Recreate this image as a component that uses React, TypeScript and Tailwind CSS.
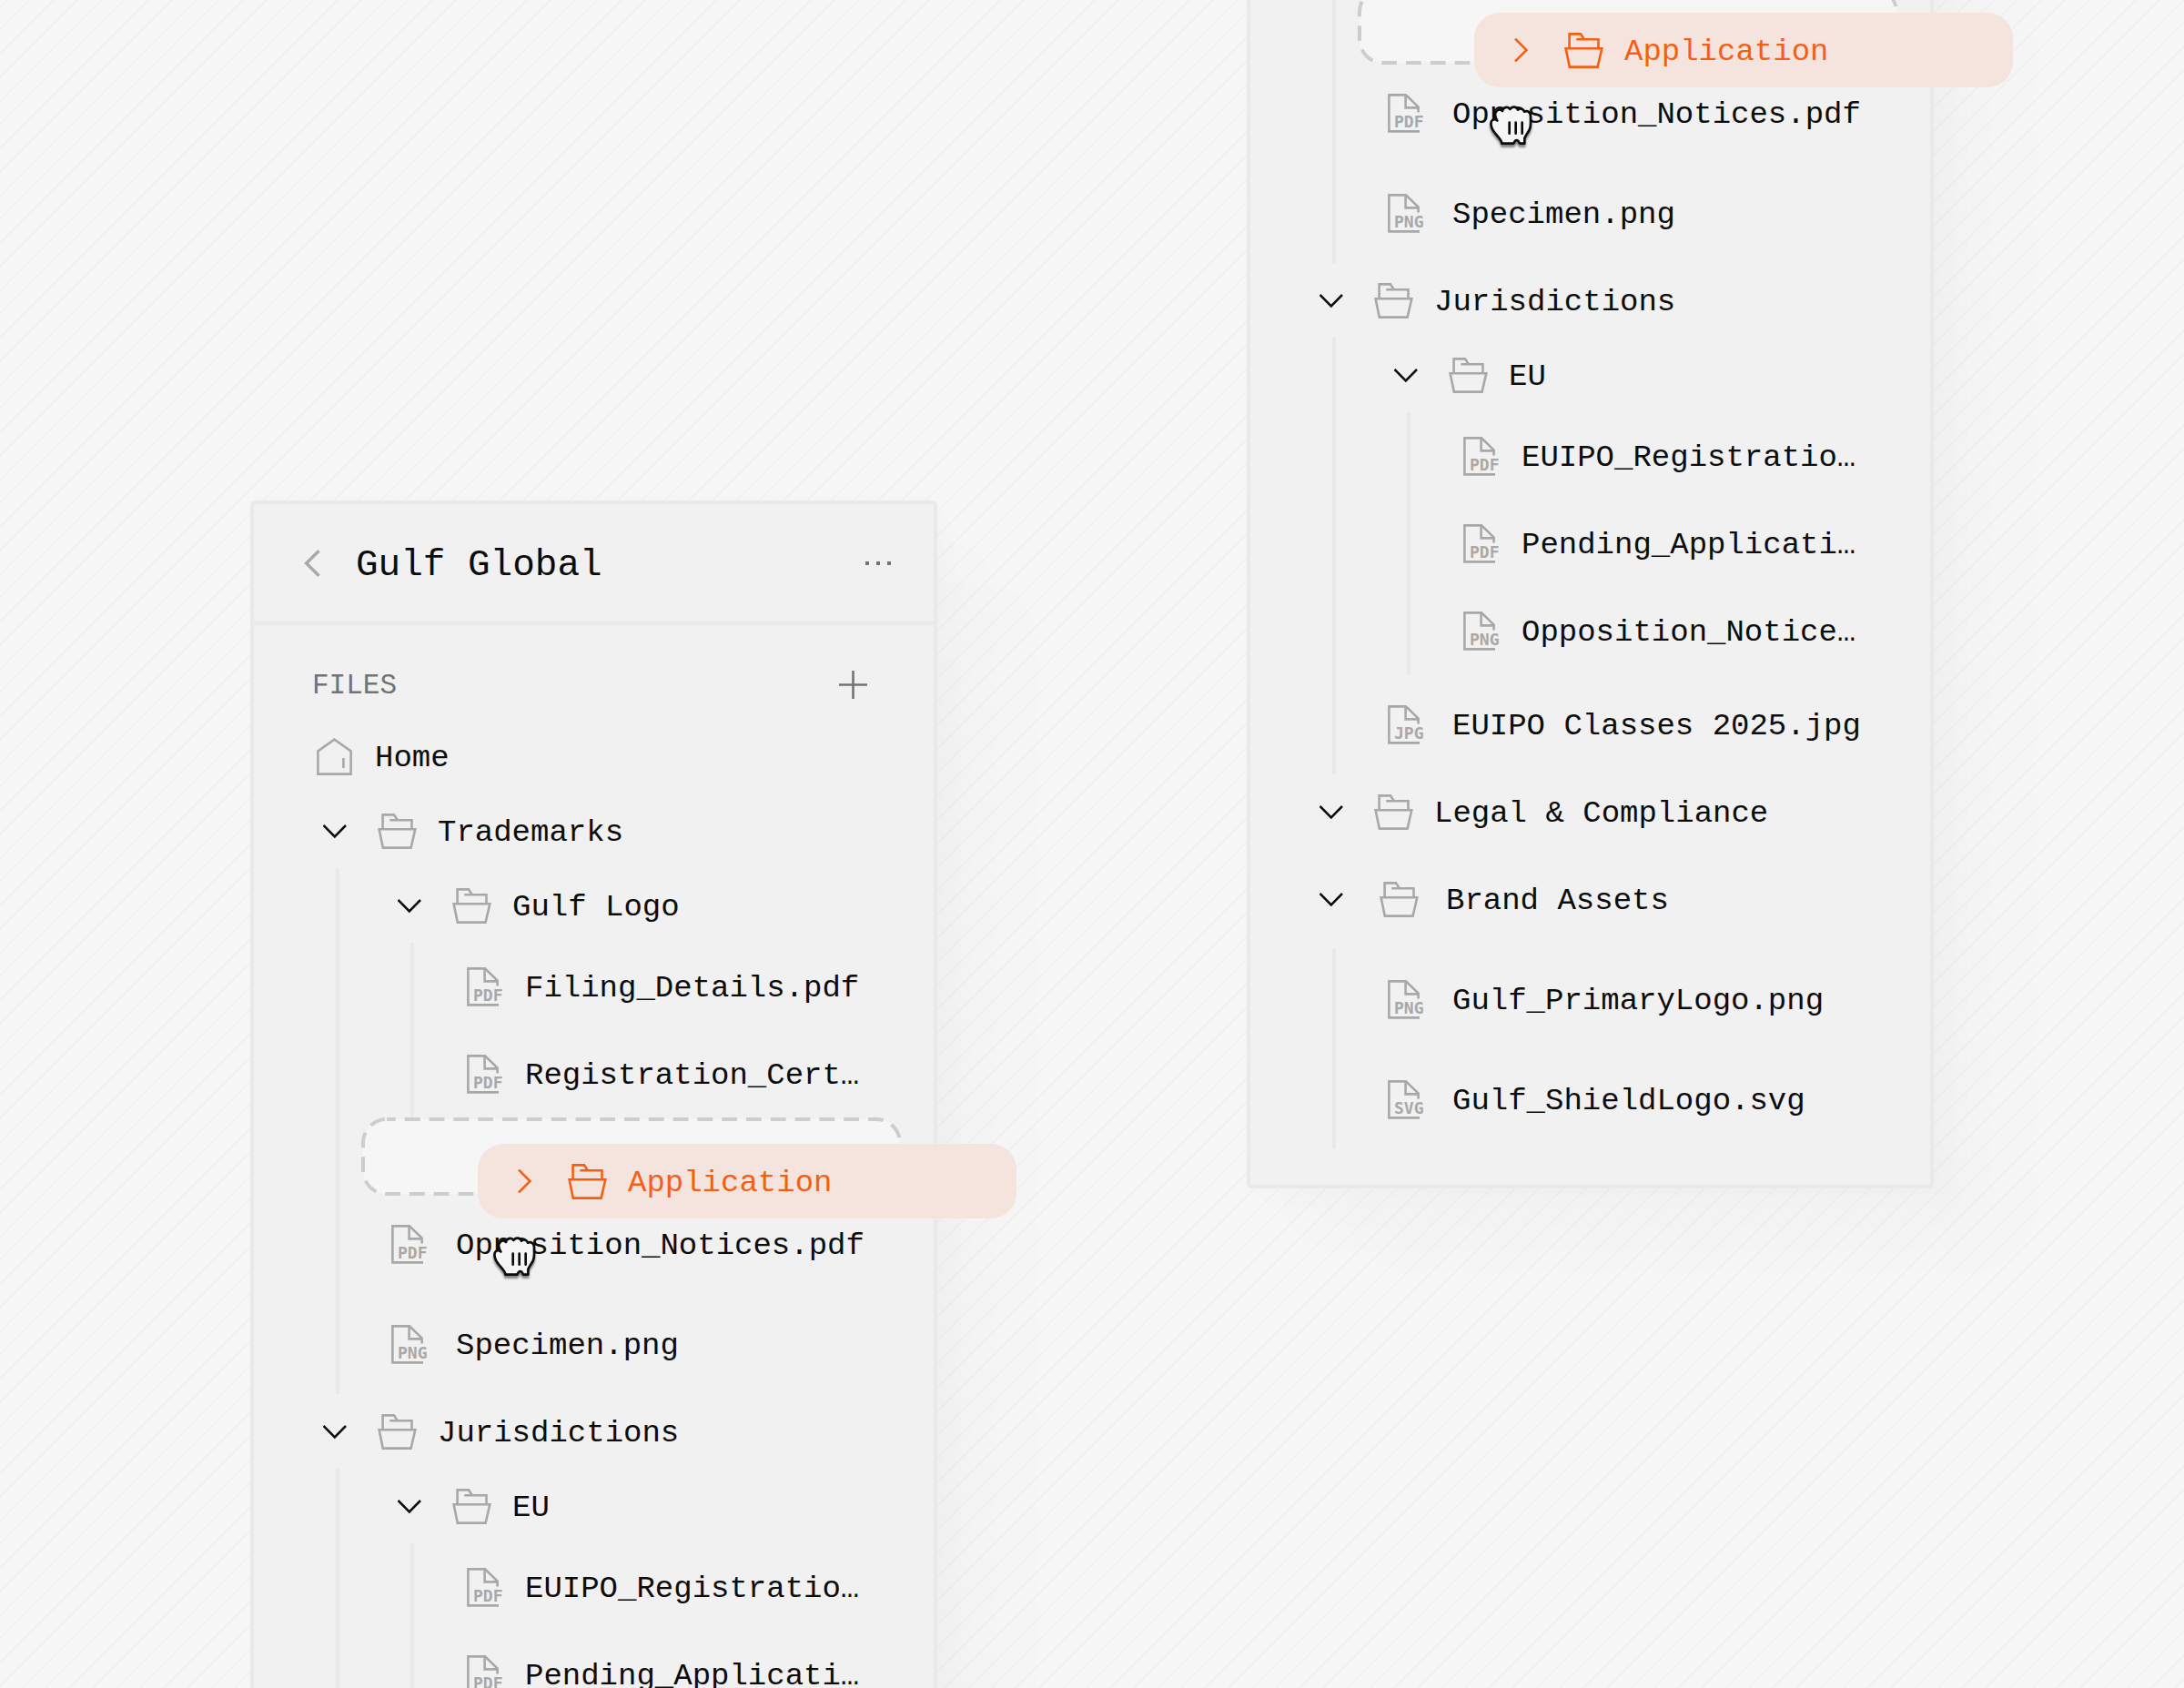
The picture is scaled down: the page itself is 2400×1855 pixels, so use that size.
import type { ReactNode } from 'react';

type FileType = 'PDF' | 'PNG' | 'JPG' | 'SVG';

function ChevronIcon({ right = false }: { right?: boolean }) {
  return (
    <svg width="26" height="26" viewBox="0 0 26 26" fill="none" stroke="currentColor" strokeWidth="2.5" className="shrink-0">
      <path d={right ? 'M6 0.5L18.5 13L6 25.5' : 'M0.5 7L12.8 19.4L25 7'} />
    </svg>
  );
}

function FolderIcon() {
  return (
    <svg width="43" height="39" viewBox="0 0 43 39" fill="none" stroke="currentColor" strokeWidth="2.6" className="shrink-0">
      <path d="M5.6 17V1.4H18L21.8 7.2" />
      <path d="M13.3 7.2H37.5V17" />
      <path d="M1.6 17.2H41.3L36.6 37.6H5.8Z" />
    </svg>
  );
}

function HomeIcon() {
  return (
    <svg width="39" height="41" viewBox="0 0 39 41" fill="none" stroke="#a8a8a8" strokeWidth="2.6" className="shrink-0">
      <path d="M19.4 1.6L37.6 14.4V39.6H1.4V14.4Z" />
      <path d="M29.4 22V33" />
    </svg>
  );
}

function FileIcon({ type }: { type: FileType }) {
  return (
    <svg width="39" height="43" viewBox="0 0 39 43" fill="none" stroke="#a8a8a8" strokeWidth="2.6" className="shrink-0 overflow-visible">
      <path d="M35 41.4H1.4V1.4H20L33.6 14.6V20.5" />
      <path d="M19.6 1.4V15.4H33.6" />
      <text x="7" y="37" fill="#a8a8a8" stroke="none" fontFamily="'DejaVu Sans Mono', monospace" fontSize="18" fontWeight="700">
        {type}
      </text>
    </svg>
  );
}

function GrabCursor() {
  return (
    <svg
      width="48"
      height="48"
      viewBox="0 0 144 144"
      fill="#f6f6f6"
      stroke="#0c0c0c"
      strokeWidth="8"
      strokeLinejoin="round"
      strokeLinecap="round"
      className="absolute top-[131px] left-[145px] drop-shadow-[0_3px_1px_rgba(0,0,0,0.45)]"
    >
      <path d="M40 125C40 112 20 98 10 80C3 67 2 53 9 48C15 44 22 47 25 50C17 36 16 22 25 16C31 12 38 14 42 18C43 6 60 1 67 12C74 1 90 3 93 14C101 7 112 11 114 20C126 15 136 24 135 38C134 52 138 66 131 80C126 90 118 98 115 108L115 125H99C96 118 93 114 89 114C85 114 82 118 79 125Z" />
      <path d="M65 56V92M86 56V92M107 56V92" fill="none" />
    </svg>
  );
}

function Label({ children }: { children: ReactNode }) {
  return <span className="pt-1 text-[34px] leading-10 whitespace-nowrap">{children}</span>;
}

function FileRow({ name, type, nested = false }: { name: string; type: FileType; nested?: boolean }) {
  return (
    <li>
      <a href="#" className={nested ? 'flex h-24 items-center gap-[25px] pl-[58px]' : 'flex h-[110px] items-center gap-8 pl-[57px]'}>
        <FileIcon type={type} />
        <Label>{name}</Label>
      </a>
    </li>
  );
}

type FolderProps = {
  name: string;
  nested?: boolean;
  roomy?: boolean;
  children?: ReactNode;
};

function Folder({ name, nested = false, roomy = false, children }: FolderProps) {
  return (
    <li>
      <button
        type="button"
        className={`flex w-full items-center text-left ${nested ? 'pl-16' : 'pl-[76px]'} ${roomy ? 'h-[110px]' : 'h-[82px]'}`}
      >
        <ChevronIcon />
        <span className={roomy ? 'flex items-center gap-[30px] pl-10 text-[#a8a8a8]' : 'flex items-center gap-[23px] pl-[34px] text-[#a8a8a8]'}>
          <FolderIcon />
          <span className="flex text-[#0c0c0c]">
            <Label>{name}</Label>
          </span>
        </span>
      </button>
      {children && (
        <ul className={`border-l-4 border-[#e9e9e9] ${nested ? 'ml-[78px]' : 'ml-[90px]'}`}>{children}</ul>
      )}
    </li>
  );
}

// Empty slot with the folder that is being dragged on top of it
function DropZone() {
  return (
    <li className="relative z-10 mr-9 ml-6 h-[84px]">
      <svg className="h-[86px] w-[594px]" viewBox="0 0 594 86">
        <rect
          x="2"
          y="2"
          width="590"
          height="82"
          rx="26"
          fill="#f6f6f6"
          stroke="#cdcdcd"
          strokeWidth="4"
          strokeDasharray="16.8 10"
          strokeDashoffset="7"
        />
      </svg>
      <button
        type="button"
        className="absolute top-[29px] left-32 flex h-[82px] w-[592px] items-center rounded-[28px] bg-[#f5e4de] pl-[39px] text-[#f55f14]"
      >
        <ChevronIcon right />
        <span className="flex items-center gap-[23px] pl-[34px]">
          <FolderIcon />
          <Label>Application</Label>
        </span>
      </button>
      <GrabCursor />
    </li>
  );
}

function FilesPanel({ className }: { className: string }) {
  return (
    <aside
      className={`w-[755px] shrink-0 rounded-md border-4 border-[#e9e9e9] bg-[#f1f1f1] pb-[39px] shadow-[14px_14px_30px_rgba(0,0,0,0.01),50px_55px_60px_rgba(0,0,0,0.011),110px_90px_70px_rgba(0,0,0,0.008)] ${className}`}
    >
      <header className="flex h-[133px] items-center border-b-4 border-[#e9e9e9] pr-[47px] pl-[55px]">
        <button type="button" aria-label="Back">
          <svg width="18" height="30" viewBox="0 0 18 30" fill="none" stroke="#a8a8a8" strokeWidth="3.4">
            <path d="M16.5 1.2L2.6 15L16.5 28.8" />
          </svg>
        </button>
        <h2 className="pt-1 pl-[39px] text-[41px] leading-[48px]">Gulf Global</h2>
        <button type="button" aria-label="More" className="ml-auto">
          <svg width="28" height="4" viewBox="0 0 28 4" fill="#737373">
            <path d="M0 0h4v4h-4zM12 0h4v4h-4zM24 0h4v4h-4z" />
          </svg>
        </button>
      </header>

      <div className="mt-[27px] flex h-[76px] items-center justify-between pr-[73px] pl-16">
        <h3 className="pt-1 text-[31px] leading-9 text-[#737373]">FILES</h3>
        <button type="button" aria-label="Add file">
          <svg width="31" height="31" viewBox="0 0 31 31" fill="none" stroke="#737373" strokeWidth="2.6">
            <path d="M15.5 0V31M0 15.5H31" />
          </svg>
        </button>
      </div>

      <nav>
        <a href="#" className="flex h-[82px] items-center gap-[25px] pl-[69px]">
          <HomeIcon />
          <Label>Home</Label>
        </a>
        <ul>
          <Folder name="Trademarks">
            <Folder name="Gulf Logo" nested>
              <FileRow name="Filing_Details.pdf" type="PDF" nested />
              <FileRow name="Registration_Cert…" type="PDF" nested />
            </Folder>
            <DropZone />
            <FileRow name="Opposition_Notices.pdf" type="PDF" />
            <FileRow name="Specimen.png" type="PNG" />
          </Folder>
          <Folder name="Jurisdictions">
            <Folder name="EU" nested>
              <FileRow name="EUIPO_Registratio…" type="PDF" nested />
              <FileRow name="Pending_Applicati…" type="PDF" nested />
              <FileRow name="Opposition_Notice…" type="PNG" nested />
            </Folder>
            <FileRow name="EUIPO Classes 2025.jpg" type="JPG" />
          </Folder>
          <Folder name="Legal & Compliance" />
          <Folder name="Brand Assets" roomy>
            <FileRow name="Gulf_PrimaryLogo.png" type="PNG" />
            <FileRow name="Gulf_ShieldLogo.svg" type="SVG" />
          </Folder>
        </ul>
      </nav>
    </aside>
  );
}

export default function App() {
  return (
    <main className="relative h-screen overflow-hidden bg-[#f6f6f6] font-['Liberation_Mono',monospace] text-[#0c0c0c]">
      {/* Diagonal hatching */}
      <svg className="absolute inset-0 h-full w-full" aria-hidden="true">
        <defs>
          <pattern id="hatch" x="7" width="26" height="26" patternUnits="userSpaceOnUse">
            <path d="M-2 2L2 -2M0 26L26 0M24 28L28 24" stroke="#f1f1f1" strokeWidth="2" />
          </pattern>
        </defs>
        <rect width="100%" height="100%" fill="url(#hatch)" />
      </svg>
      <div className="relative flex items-start justify-center gap-[340px]">
        <FilesPanel className="mt-[550px]" />
        <FilesPanel className="-mt-[693px]" />
      </div>
    </main>
  );
}
